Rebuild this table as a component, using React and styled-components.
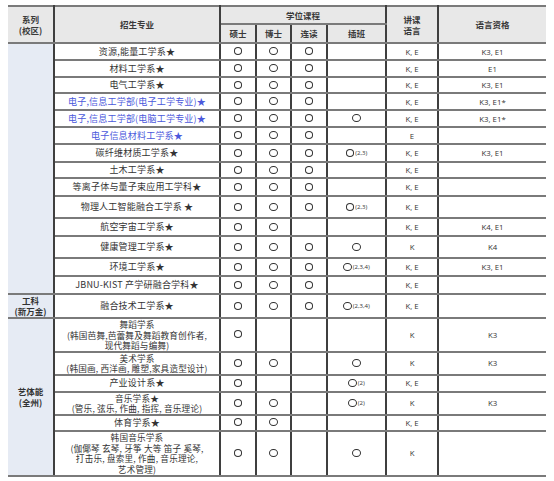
import styled, { createGlobalStyle } from "styled-components";

const GlobalStyle = createGlobalStyle`
  body {
    margin: 0;
    background: #fff;
  }
`;

const rows = [
  { name: ["资源,能量工学系★"], m: 1, d: 1, c: 1, lang: "K, E", cert: "K3, E1", h: 17 },
  { name: ["材料工学系★"], m: 1, d: 1, c: 1, lang: "K, E", cert: "E1", h: 17 },
  { name: ["电气工学系★"], m: 1, d: 1, c: 1, lang: "K, E", cert: "K3, E1", h: 16 },
  { name: ["电子,信息工学部(电子工学专业)★"], blue: true, m: 1, d: 1, c: 1, lang: "K, E", cert: "K3, E1*", h: 17 },
  { name: ["电子,信息工学部(电脑工学专业)★"], blue: true, m: 1, d: 1, c: 1, t: "", lang: "K, E", cert: "K3, E1*", h: 17 },
  { name: ["电子信息材料工学系★"], blue: true, m: 1, d: 1, c: 1, lang: "E", h: 17 },
  { name: ["碳纤维材质工学系★"], m: 1, d: 1, c: 1, t: "(2,3)", lang: "K, E", cert: "K3, E1", h: 18 },
  { name: ["土木工学系★"], m: 1, d: 1, c: 1, lang: "K, E", h: 16 },
  { name: ["等离子体与量子束应用工学科★"], m: 1, d: 1, c: 1, lang: "K, E", h: 18 },
  { name: ["物理人工智能融合工学系 ★"], m: 1, d: 1, c: 1, t: "(2,3)", lang: "K, E", h: 22 },
  { name: ["航空宇宙工学系★"], m: 1, d: 1, lang: "K, E", cert: "K4, E1", h: 18 },
  { name: ["健康管理工学系★"], m: 1, d: 1, c: 1, t: "", lang: "K", cert: "K4", h: 22 },
  { name: ["环境工学系★"], m: 1, d: 1, c: 1, t: "(2,3,4)", lang: "K, E", cert: "K3, E1", h: 18 },
  { name: ["JBNU-KIST 产学研融合学科★"], m: 1, d: 1, c: 1, lang: "K, E", h: 18 },
  { name: ["融合技术工学系★"], m: 1, d: 1, c: 1, t: "(2,3,4)", lang: "K, E", h: 24 },
  { name: ["舞蹈学系", "(韩国芭舞,芭蕾舞及舞蹈教育创作者,", "现代舞蹈与编舞)"], m: 1, lang: "K", cert: "K3", h: 32 },
  { name: ["美术学系", "(韩国画, 西洋画, 雕塑,家具造型设计)"], m: 1, d: 1, t: "", lang: "K", cert: "K3", h: 23 },
  { name: ["产业设计系★"], m: 1, t: "(2)", lang: "K, E", h: 17 },
  { name: ["音乐学系★", "(管乐, 弦乐, 作曲, 指挥, 音乐理论)"], m: 1, d: 1, t: "(2)", lang: "K", cert: "K3", h: 23 },
  { name: ["体育学系★"], m: 1, d: 1, lang: "K, E", h: 16 },
  {
    name: ["韩国音乐学系", "(伽倻琴 玄琴, 牙筝 大等 笛子 奚琴,", "打击乐, 盘索里, 作曲, 音乐理论,", "艺术管理)"],
    m: 1,
    d: 1,
    t: "",
    lang: "K",
    h: 45,
  },
];

// first column spans
const groups = {
  0: { span: 14, label: [] },
  14: { span: 1, label: ["工科", "(新万金)"] },
  15: { span: 6, label: ["艺体能", "(全州)"] },
};

function Mark({ note }) {
  if (note === undefined) return null;
  return (
    <MarkWrap>
      <Circle />
      {note && <Note>{note}</Note>}
    </MarkWrap>
  );
}

function Lines({ items }) {
  return items.map((line, i) => <Line key={i}>{line}</Line>);
}

export default function App() {
  return (
    <>
      <GlobalStyle />
      <Page>
        <Table>
          <colgroup>
            <col style={{ width: 46 }} />
            <col style={{ width: 166 }} />
            <col style={{ width: 36 }} />
            <col style={{ width: 35 }} />
            <col style={{ width: 36 }} />
            <col style={{ width: 59 }} />
            <col style={{ width: 52 }} />
            <col style={{ width: 108 }} />
          </colgroup>
          <thead>
            <Row $h={18}>
              <Head rowSpan={2}>
                <Line>系列</Line>
                <Line>(校区)</Line>
              </Head>
              <Head rowSpan={2}>招生专业</Head>
              <Head colSpan={4}>学位课程</Head>
              <Head rowSpan={2}>
                <Line>讲课</Line>
                <Line>语言</Line>
              </Head>
              <Head rowSpan={2}>语言资格</Head>
            </Row>
            <Row $h={19}>
              <Head>硕士</Head>
              <Head>博士</Head>
              <Head>连读</Head>
              <Head>插班</Head>
            </Row>
          </thead>
          <tbody>
            {rows.map((r, i) => (
              <Row key={i} $h={r.h}>
                {groups[i] && (
                  <Group rowSpan={groups[i].span}>
                    <Lines items={groups[i].label} />
                  </Group>
                )}
                <Major $blue={r.blue} $multi={r.name.length > 1}>
                  <Lines items={r.name} />
                </Major>
                <Cell>{r.m && <Mark note="" />}</Cell>
                <Cell>{r.d && <Mark note="" />}</Cell>
                <Cell>{r.c && <Mark note="" />}</Cell>
                <Cell>
                  <Mark note={r.t} />
                </Cell>
                <Latin>{r.lang}</Latin>
                <Latin>{r.cert}</Latin>
              </Row>
            ))}
          </tbody>
        </Table>
      </Page>
    </>
  );
}

const Page = styled.div`
  padding: 5px 8px;
`;

const Table = styled.table`
  width: 538px;
  border-collapse: collapse;
  table-layout: fixed;
  border-top: 2px solid #555;
  border-bottom: 2px solid #555;
  border-left: hidden;
  border-right: hidden;
  font-family: "Noto Sans CJK SC", "Noto Sans", sans-serif;
  font-size: 9px;
  color: #333;

  td,
  th {
    padding: 0;
    text-align: center;
    vertical-align: middle;
    border-top: 2px solid #7a7a7a;
    border-bottom: 2px solid #7a7a7a;
    border-left: 2px solid #3f3f3f;
    border-right: 2px solid #3f3f3f;
  }
`;

const Row = styled.tr`
  height: ${(p) => p.$h}px;
`;

const Head = styled.th`
  background: #e8e8e8;
  font-weight: 700;
  font-size: 8.5px;
  line-height: 11px;
  color: #3a3a3a;
`;

const Group = styled.td`
  background: #e6ebf4;
  font-weight: 700;
  font-size: 8.5px;
  line-height: 11px;
  color: #333;
`;

const Major = styled.td`
  color: ${(p) => (p.$blue ? "#4b58dc" : "#333")};
  font-size: ${(p) => (p.$multi ? "8.6px" : "9px")};
  line-height: ${(p) => (p.$multi ? "10.5px" : "12px")};
  letter-spacing: 0.2px;
`;

const Line = styled.div`
  white-space: nowrap;
`;

const Cell = styled.td``;

const Latin = styled.td`
  font-family: "Open Sans", "Liberation Sans", sans-serif;
  font-size: 7.8px;
  color: #333;
`;

const MarkWrap = styled.span`
  display: inline-flex;
  align-items: flex-end;
  gap: 1px;
  line-height: 1;
`;

const Circle = styled.span`
  display: inline-block;
  width: 6.5px;
  height: 6px;
  border: 1.3px solid #333;
  border-radius: 50%;
`;

const Note = styled.span`
  font-family: "Open Sans", "Liberation Sans", sans-serif;
  font-size: 6px;
  line-height: 7px;
  color: #333;
`;
